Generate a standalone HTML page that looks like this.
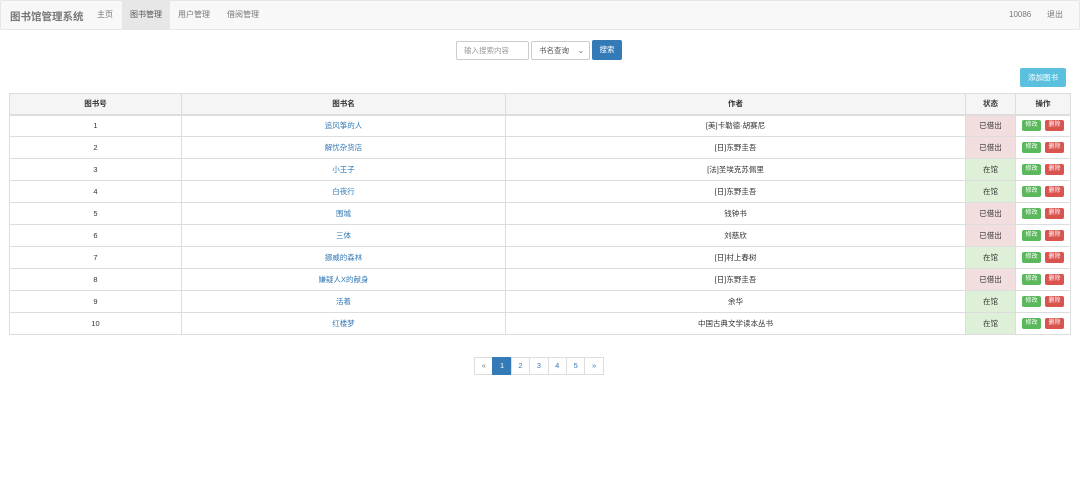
<!DOCTYPE html>
<html><head><meta charset="utf-8"><style>
*{box-sizing:border-box;margin:0;padding:0}
body{width:1080px;height:497px;background:#fff;font-family:"Liberation Sans","Noto Sans CJK SC",sans-serif;font-size:8px;color:#333;position:relative;overflow:hidden}
.nav{position:absolute;left:0;top:0;width:1080px;height:30px;background:#f8f8f8;border:1px solid #e7e7e7;border-radius:2px}
.brand{position:absolute;left:9px;top:8px;font-size:10.5px;font-weight:bold;color:#777}
.ni{position:absolute;top:0;height:28px;line-height:28px;color:#777;font-size:8px;padding:0 8px}
.act{background:#e7e7e7;color:#555}
.inp{position:absolute;top:41px;height:19px;border:1px solid #ccc;border-radius:2px;font-size:7.5px;line-height:17px;padding-left:7px}
.btn{position:absolute;color:#fff;border-radius:2px;text-align:center;font-size:7.5px}
table{position:absolute;left:9px;top:93px;width:1062px;border-collapse:collapse}
td,th{border:1px solid #ddd;height:22px;text-align:center;font-size:7.5px;font-weight:normal;vertical-align:middle}
th{background:#f5f5f5;font-weight:bold;color:#333;border-bottom:2px solid #ddd;height:21px}
td a{color:#337ab7}
.r{background:#f2dede}.g{background:#dff0d8}
.e,.d{display:inline-block;width:19px;height:11px;line-height:11px;color:#fff;border-radius:2px;font-size:6px;margin:0 2px;vertical-align:middle}
.e{background:#5cb85c}.d{background:#d9534f}
.pg{position:absolute;left:475px;top:357px;display:flex}
.pg span{width:19.4px;height:18px;border:1px solid #ddd;margin-left:-1px;text-align:center;line-height:16px;color:#337ab7;font-size:7.5px}
.pg span.a{background:#337ab7;color:#fff;border-color:#337ab7}
</style></head><body>
<div class="nav">
<div class="brand">图书馆管理系统</div>
<div class="ni" style="left:88px">主页</div>
<div class="ni act" style="left:121px">图书管理</div>
<div class="ni" style="left:169px">用户管理</div>
<div class="ni" style="left:218px">借阅管理</div>
<div class="ni" style="left:1000px">10086</div>
<div class="ni" style="left:1038px">退出</div>
</div>
<div class="inp" style="left:456px;width:73px;color:#999">输入搜索内容</div>
<div class="inp" style="left:531px;width:59px;color:#555">书名查询 <span style="position:absolute;right:5px">⌄</span></div>
<div class="btn" style="left:592px;top:40px;width:30px;height:20px;line-height:20px;background:#337ab7">搜索</div>
<div class="btn" style="left:1020px;top:68px;width:46px;height:19px;line-height:19px;background:#5bc0de">添加图书</div>
<table>
<tr><th style="width:172px">图书号</th><th style="width:324px">图书名</th><th style="width:460px">作者</th><th style="width:50px">状态</th><th>操作</th></tr>
<tr><td>1</td><td><a>追风筝的人</a></td><td>[美]卡勒德·胡赛尼</td><td class="r">已借出</td><td><span class="e">修改</span><span class="d">删除</span></td></tr>
<tr><td>2</td><td><a>解忧杂货店</a></td><td>[日]东野圭吾</td><td class="r">已借出</td><td><span class="e">修改</span><span class="d">删除</span></td></tr>
<tr><td>3</td><td><a>小王子</a></td><td>[法]圣埃克苏佩里</td><td class="g">在馆</td><td><span class="e">修改</span><span class="d">删除</span></td></tr>
<tr><td>4</td><td><a>白夜行</a></td><td>[日]东野圭吾</td><td class="g">在馆</td><td><span class="e">修改</span><span class="d">删除</span></td></tr>
<tr><td>5</td><td><a>围城</a></td><td>钱钟书</td><td class="r">已借出</td><td><span class="e">修改</span><span class="d">删除</span></td></tr>
<tr><td>6</td><td><a>三体</a></td><td>刘慈欣</td><td class="r">已借出</td><td><span class="e">修改</span><span class="d">删除</span></td></tr>
<tr><td>7</td><td><a>挪威的森林</a></td><td>[日]村上春树</td><td class="g">在馆</td><td><span class="e">修改</span><span class="d">删除</span></td></tr>
<tr><td>8</td><td><a>嫌疑人X的献身</a></td><td>[日]东野圭吾</td><td class="r">已借出</td><td><span class="e">修改</span><span class="d">删除</span></td></tr>
<tr><td>9</td><td><a>活着</a></td><td>余华</td><td class="g">在馆</td><td><span class="e">修改</span><span class="d">删除</span></td></tr>
<tr><td>10</td><td><a>红楼梦</a></td><td>中国古典文学读本丛书</td><td class="g">在馆</td><td><span class="e">修改</span><span class="d">删除</span></td></tr>
</table>
<div class="pg"><span style="color:#777">«</span><span class="a">1</span><span>2</span><span>3</span><span>4</span><span>5</span><span>»</span></div>
</body></html>
